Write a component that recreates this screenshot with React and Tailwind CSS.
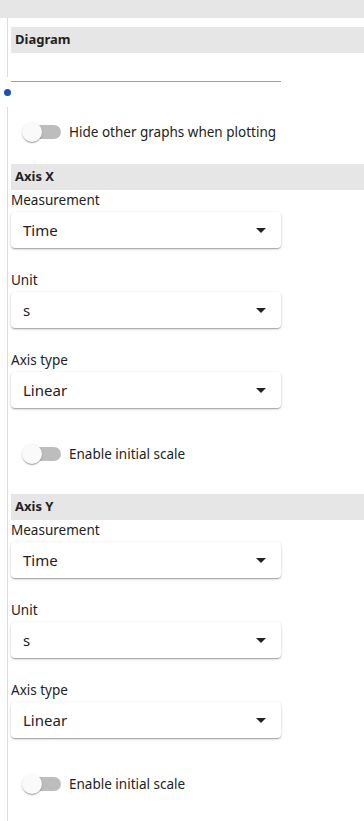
// Panel de configuración del gráfico: diagrama + ejes X / Y.

const font = { fontFamily: '"Noto Sans", "Open Sans", sans-serif' }

function Encabezado({ children, className = '' }) {
  return (
    <div className={`h-[26px] bg-[#e6e6e6] pl-[4px] flex items-center text-[13px] font-bold text-[#222] ${className}`}>
      {children}
    </div>
  )
}

function Interruptor({ label, className = '' }) {
  return (
    <div className={`h-[38px] flex items-center pl-[12px] ${className}`}>
      <div className="relative w-[38px] h-[14px] rounded-full bg-[#bdbdbd]">
        <div className="absolute -left-[1px] -top-[3px] w-[20px] h-[20px] rounded-full bg-[#fafafa] shadow-[0_2px_1px_-1px_rgba(0,0,0,0.2),0_1px_1px_0_rgba(0,0,0,0.14),0_1px_3px_0_rgba(0,0,0,0.12)]" />
      </div>
      <span className="ml-[8px] text-[13.5px] text-[#222]">{label}</span>
    </div>
  )
}

function Selector({ etiqueta, valor, className = '' }) {
  return (
    <div className={className}>
      <div className="h-[20px] flex items-center text-[13.5px] text-[#222]">{etiqueta}</div>
      <div className="mt-[2px] w-[270px] h-[36px] rounded-[4px] bg-white shadow-[0_1px_3px_0_rgba(0,0,0,0.2),0_1px_1px_0_rgba(0,0,0,0.14),0_2px_1px_-1px_rgba(0,0,0,0.12)] flex items-center justify-between pl-[12px] pr-[15px]">
        <span className="text-[15px] text-[#222]">{valor}</span>
        <svg width="10" height="5" viewBox="0 0 10 5">
          <path d="M0 0 L10 0 L5 5 Z" fill="#222" />
        </svg>
      </div>
    </div>
  )
}

function Eje({ titulo, className = '' }) {
  return (
    <div className={className}>
      <Encabezado>{titulo}</Encabezado>
      <Selector etiqueta="Measurement" valor="Time" />
      <Selector etiqueta="Unit" valor="s" className="mt-[22px]" />
      <Selector etiqueta="Axis type" valor="Linear" className="mt-[22px]" />
      <Interruptor label="Enable initial scale" className="mt-[27px]" />
    </div>
  )
}

export default function App() {
  return (
    <div className="w-[364px] min-h-[821px] bg-white flex flex-col" style={font}>
      <div className="h-[18px] bg-[#e6e6e6]" />
      <div className="flex flex-1">
        <div className="w-[11px] flex flex-col">
          <div className="ml-[7px] w-px h-[59px] bg-[#dcdcdc]" />
          <div className="ml-[4px] mt-[12px] w-[7px] h-[7px] rounded-full bg-[#1e4fb4]" />
          <div className="ml-[7px] mt-[11px] w-px flex-1 bg-[#dcdcdc]" />
        </div>
        <div className="flex-1 pb-[20px]">
          <Encabezado className="mt-[9px]">Diagram</Encabezado>
          <div className="mt-[28px] w-[270px] h-px bg-[#9e9e9e]" />
          <Interruptor label="Hide other graphs when plotting" className="mt-[31px]" />
          <Eje titulo="Axis X" className="mt-[13px]" />
          <Eje titulo="Axis Y" className="mt-[21px]" />
        </div>
      </div>
    </div>
  )
}
